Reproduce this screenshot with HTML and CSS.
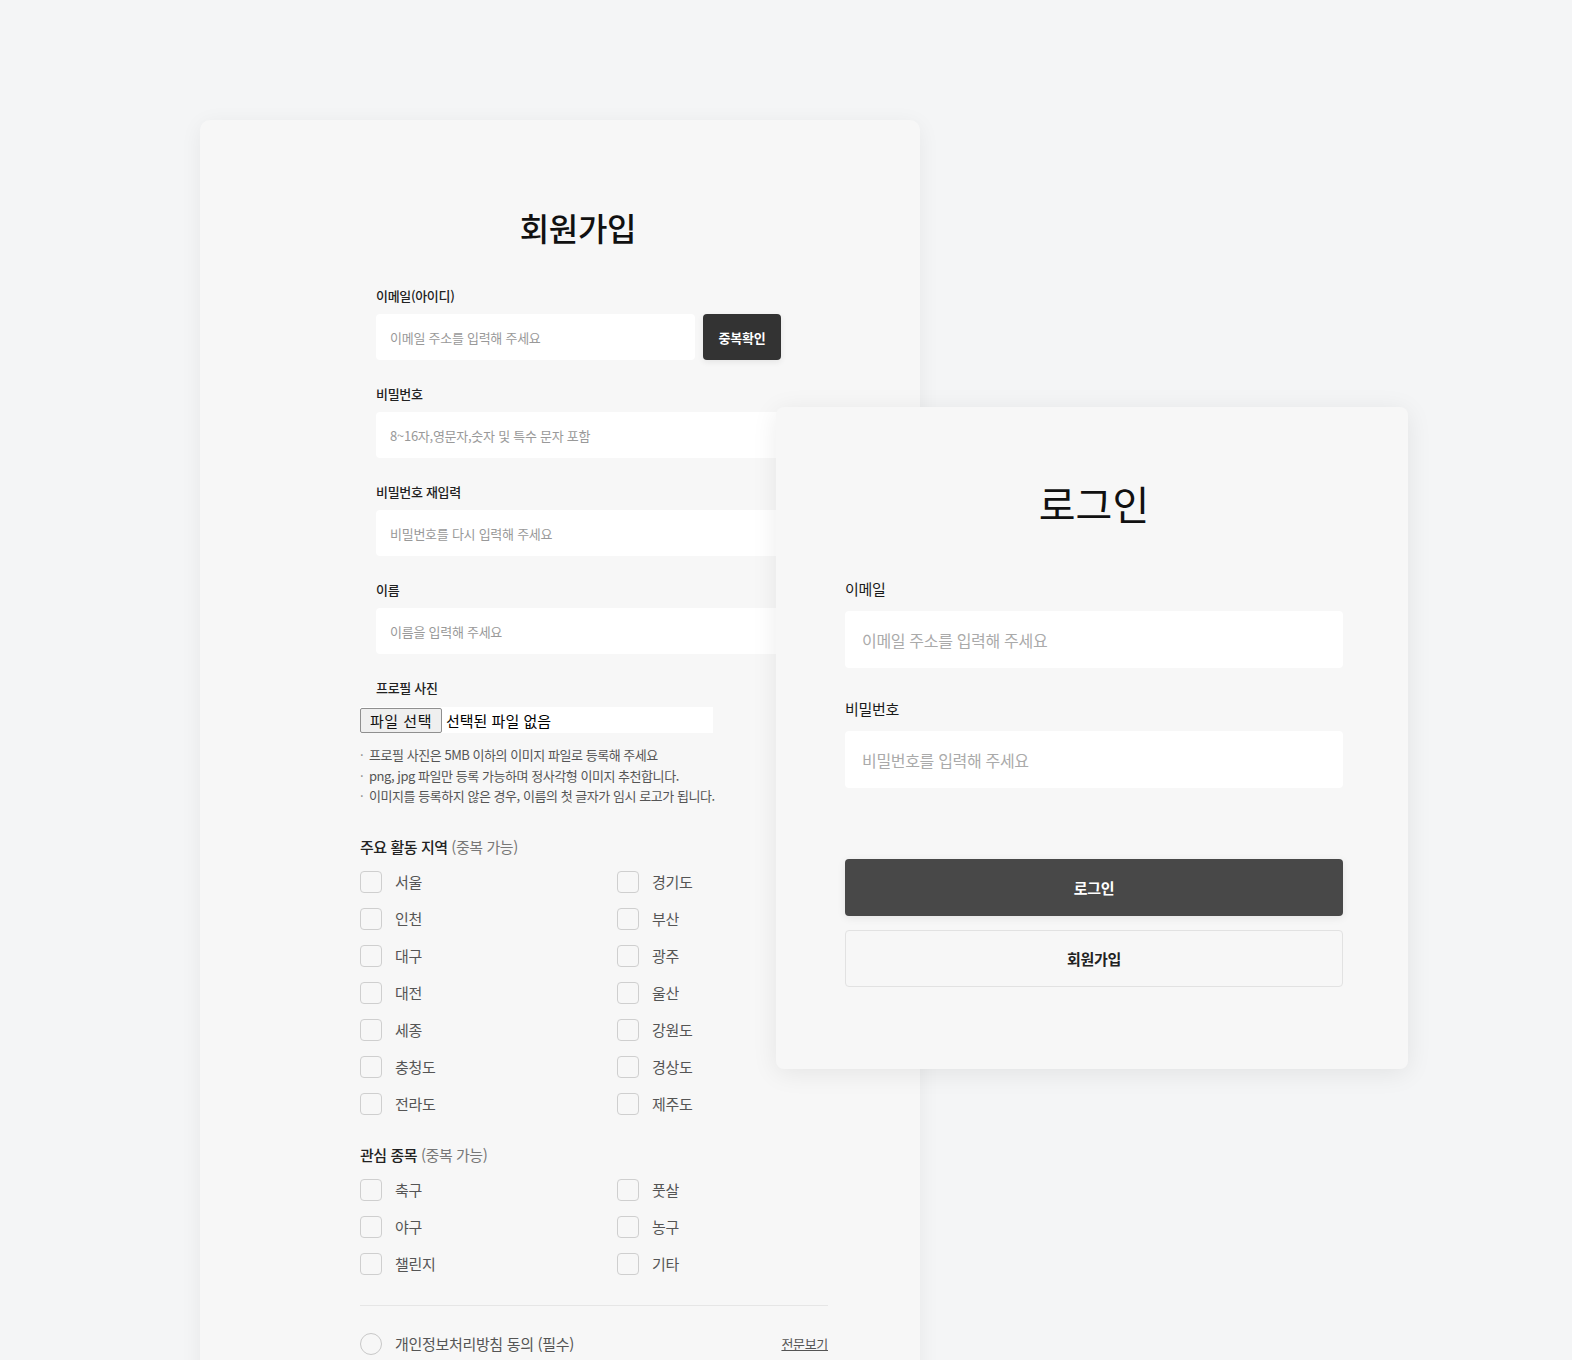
FILE: index.html
```html
<!DOCTYPE html>
<html lang="ko">
<head>
<meta charset="utf-8">
<title>회원가입 / 로그인</title>
<link rel="stylesheet" href="styles.css">
</head>
<body>
<div class="page">
  <section class="signup">
    <h1 class="signup-title">회원가입</h1>

    <div class="field">
      <label class="label">이메일(아이디)</label>
      <div class="row">
        <input class="input input-email" type="text" placeholder="이메일 주소를 입력해 주세요">
        <button class="btn-check" type="button">중복확인</button>
      </div>
    </div>

    <div class="field">
      <label class="label">비밀번호</label>
      <input class="input" type="password" placeholder="8~16자,영문자,숫자 및 특수 문자 포함">
    </div>

    <div class="field">
      <label class="label">비밀번호 재입력</label>
      <input class="input" type="password" placeholder="비밀번호를 다시 입력해 주세요">
    </div>

    <div class="field">
      <label class="label">이름</label>
      <input class="input" type="text" placeholder="이름을 입력해 주세요">
    </div>

    <div class="profile">
      <div class="label profile-label">프로필 사진</div>
      <div class="file">
        <span class="file-btn">파일 선택</span>
        <span class="file-text">선택된 파일 없음</span>
      </div>
      <ul class="notes">
        <li><span class="dot">·</span>프로필 사진은 5MB 이하의 이미지 파일로 등록해 주세요</li>
        <li><span class="dot">·</span>png, jpg 파일만 등록 가능하며 정사각형 이미지 추천합니다.</li>
        <li><span class="dot">·</span>이미지를 등록하지 않은 경우, 이름의 첫 글자가 임시 로고가 됩니다.</li>
      </ul>
    </div>

    <h2 class="section-title">주요 활동 지역 <span class="muted">(중복 가능)</span></h2>
    <div class="checks">
      <label class="check"><span class="box"></span>서울</label>
      <label class="check"><span class="box"></span>경기도</label>
      <label class="check"><span class="box"></span>인천</label>
      <label class="check"><span class="box"></span>부산</label>
      <label class="check"><span class="box"></span>대구</label>
      <label class="check"><span class="box"></span>광주</label>
      <label class="check"><span class="box"></span>대전</label>
      <label class="check"><span class="box"></span>울산</label>
      <label class="check"><span class="box"></span>세종</label>
      <label class="check"><span class="box"></span>강원도</label>
      <label class="check"><span class="box"></span>충청도</label>
      <label class="check"><span class="box"></span>경상도</label>
      <label class="check"><span class="box"></span>전라도</label>
      <label class="check"><span class="box"></span>제주도</label>
    </div>

    <h2 class="section-title">관심 종목 <span class="muted">(중복 가능)</span></h2>
    <div class="checks">
      <label class="check"><span class="box"></span>축구</label>
      <label class="check"><span class="box"></span>풋살</label>
      <label class="check"><span class="box"></span>야구</label>
      <label class="check"><span class="box"></span>농구</label>
      <label class="check"><span class="box"></span>챌린지</label>
      <label class="check"><span class="box"></span>기타</label>
    </div>

    <hr class="divider">

    <div class="agree">
      <label class="check"><span class="radio"></span>개인정보처리방침 동의 (필수)</label>
      <a class="more" href="#">전문보기</a>
    </div>
  </section>

  <section class="login">
    <h1 class="login-title">로그인</h1>
    <div class="lfield">
      <label class="llabel">이메일</label>
      <input class="linput" type="text" placeholder="이메일 주소를 입력해 주세요">
    </div>
    <div class="lfield">
      <label class="llabel">비밀번호</label>
      <input class="linput" type="password" placeholder="비밀번호를 입력해 주세요">
    </div>
    <div class="lbuttons">
      <button class="lbtn lbtn-primary" type="button">로그인</button>
      <button class="lbtn lbtn-outline" type="button">회원가입</button>
    </div>
  </section>
</div>
</body>
</html>
```

FILE: styles.css
```css
* { box-sizing: border-box; }

html, body {
  margin: 0;
  padding: 0;
  background: #f4f5f6;
  font-family: "Noto Sans CJK KR", "Noto Sans", sans-serif;
  color: #222;
  letter-spacing: -0.02em;
}

input, button { letter-spacing: -0.02em; }

.page {
  position: relative;
  height: 1360px;
  overflow: hidden;
  padding: 120px 0 0 200px;
}

/* ---------- signup card ---------- */
.signup {
  width: 720px;
  background: #f7f7f7;
  border-radius: 10px;
  box-shadow: 0 4px 22px rgba(0, 0, 0, 0.06);
  padding: 87px 92px 120px 160px;
}

.signup-title {
  margin: 0 0 40px;
  padding-right: 32px;
  text-align: center;
  font-size: 32px;
  line-height: 40px;
  font-weight: 500;
  color: #111;
  letter-spacing: -0.01em;
}

.field {
  padding-left: 16px;
  width: 421px;
  margin-bottom: 25px;
}

.label {
  display: block;
  font-size: 13px;
  line-height: 18px;
  font-weight: 500;
  color: #222;
  margin-bottom: 9px;
}

.row {
  display: flex;
  gap: 8px;
}

.input {
  display: block;
  width: 100%;
  height: 46px;
  border: none;
  border-radius: 4px;
  background: #fff;
  padding: 0 14px;
  font-family: inherit;
  font-size: 13px;
  color: #222;
  outline: none;
}
.input::placeholder { color: #999; }

.input-email { width: 319px; flex: none; }

.btn-check {
  flex: none;
  width: 78px;
  height: 46px;
  border: none;
  border-radius: 4px;
  background: #333;
  color: #fff;
  font-family: inherit;
  font-size: 13px;
  font-weight: 700;
  box-shadow: 0 2px 6px rgba(0, 0, 0, 0.08);
}

.profile-label {
  margin-left: 16px;
  margin-bottom: 10px;
}

.file {
  display: flex;
  align-items: center;
  width: 353px;
  height: 26px;
  background: #fff;
}

.file-btn {
  display: flex;
  align-items: center;
  justify-content: center;
  width: 82px;
  height: 25px;
  border: 1px solid #8f8f8f;
  border-radius: 2px;
  background: #efefef;
  font-size: 15px;
  color: #111;
  letter-spacing: 0.5px;
}

.file-text {
  margin-left: 4px;
  font-size: 15px;
  color: #000;
  letter-spacing: 0;
}

.notes {
  list-style: none;
  margin: 12px 0 0;
  padding: 0;
  font-size: 13px;
  line-height: 20.5px;
  color: #555;
  letter-spacing: -0.035em;
}
.notes .dot {
  display: inline-block;
  width: 9px;
  color: #888;
}

.section-title {
  margin: 29px 0 13px;
  font-size: 15px;
  line-height: 22px;
  font-weight: 500;
  color: #222;
  letter-spacing: -0.03em;
}
.muted { color: #777; font-weight: 400; }

.checks {
  display: grid;
  grid-template-columns: 257px 1fr;
  row-gap: 15px;
}

.check {
  display: flex;
  align-items: center;
  gap: 13px;
  height: 22px;
  font-size: 15px;
  color: #555;
}

.box {
  flex: none;
  width: 22px;
  height: 22px;
  border: 1px solid #cfcfcf;
  border-radius: 4px;
}

.radio {
  flex: none;
  width: 22px;
  height: 22px;
  border: 1px solid #c8c8c8;
  border-radius: 50%;
}

.divider {
  width: 468px;
  margin: 30px 0 27px;
  border: none;
  border-top: 1px solid #e6e6e6;
}

.agree {
  width: 468px;
  display: flex;
  justify-content: space-between;
  align-items: center;
}

.more {
  font-size: 13px;
  color: #555;
  text-decoration: underline;
}

/* ---------- login card (overlapping) ---------- */
.login {
  position: absolute;
  left: 776px;
  top: 407px;
  width: 632px;
  height: 662px;
  background: #f7f7f7;
  border-radius: 8px;
  box-shadow: 0 4px 26px rgba(0, 0, 0, 0.08);
  padding: 72px 65px 0 69px;
}

.login-title {
  margin: 0 0 51px;
  text-align: center;
  font-size: 40px;
  line-height: 48px;
  font-weight: 400;
  color: #111;
  letter-spacing: 0;
}

.lfield { margin-bottom: 30px; }
.lfield:last-of-type { margin-bottom: 0; }

.llabel {
  display: block;
  font-size: 15px;
  line-height: 22px;
  font-weight: 400;
  color: #1a1a1a;
  margin-bottom: 11px;
}

.linput {
  display: block;
  width: 100%;
  height: 57px;
  border: none;
  border-radius: 4px;
  background: #fff;
  padding: 0 17px;
  font-family: inherit;
  font-size: 16px;
  color: #222;
  outline: none;
}
.linput::placeholder { color: #aaa; }

.lbuttons {
  margin-top: 71px;
  display: flex;
  flex-direction: column;
  gap: 14px;
}

.lbtn {
  height: 57px;
  border-radius: 4px;
  font-family: inherit;
  font-size: 15px;
  font-weight: 700;
}

.lbtn-primary {
  border: none;
  background: #484848;
  color: #fff;
  box-shadow: 0 2px 8px rgba(0, 0, 0, 0.08);
}

.lbtn-outline {
  border: 1px solid #e2e2e2;
  background: transparent;
  color: #222;
}
```
